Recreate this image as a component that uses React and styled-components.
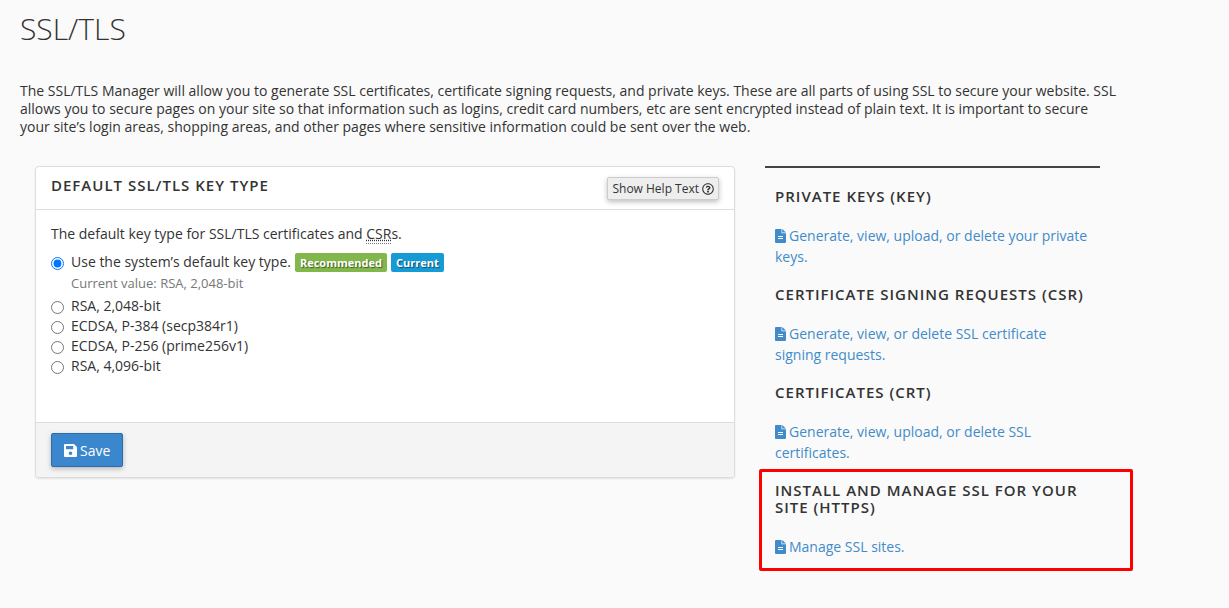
import React, { useState } from "react";
import styled, { createGlobalStyle } from "styled-components";
import { FaRegQuestionCircle } from "react-icons/fa";

const keyTypes = [
  { value: "rsa-2048", label: "RSA, 2,048-bit" },
  { value: "ecdsa-secp384r1", label: "ECDSA, P-384 (secp384r1)" },
  { value: "ecdsa-prime256v1", label: "ECDSA, P-256 (prime256v1)" },
  { value: "rsa-4096", label: "RSA, 4,096-bit" },
];

const sections = [
  {
    title: "Private Keys (KEY)",
    link: "Generate, view, upload, or delete your private keys.",
    href: "#keys",
  },
  {
    title: "Certificate Signing Requests (CSR)",
    link: "Generate, view, or delete SSL certificate signing requests.",
    href: "#csrs",
  },
  {
    title: "Certificates (CRT)",
    link: "Generate, view, upload, or delete SSL certificates.",
    href: "#certificates",
  },
  {
    title: "Install and Manage SSL for your site (HTTPS)",
    link: "Manage SSL sites.",
    href: "#install",
    highlighted: true,
  },
];

const FileIcon = () => (
  <svg width="11" height="14" viewBox="0 0 11 14" aria-hidden="true">
    <path
      fill="currentColor"
      fillRule="evenodd"
      d="M1 0h5.5v4.3h4.5V13a1 1 0 0 1-1 1H1a1 1 0 0 1-1-1V1a1 1 0 0 1 1-1zM3 7v1h5v-1zM3 9v1h5v-1z"
    />
    <path fill="currentColor" d="M7.2 0l3.8 3.6H7.2z" />
  </svg>
);

const SaveIcon = () => (
  <svg width="13" height="13" viewBox="0 0 13 13" aria-hidden="true">
    <path
      fill="currentColor"
      fillRule="evenodd"
      d="M1 0h9l3 3v9a1 1 0 0 1-1 1H1a1 1 0 0 1-1-1V1a1 1 0 0 1 1-1zM2 2v3.2h7.2V2zM6.5 7.4a1.8 1.8 0 1 0 0 3.6a1.8 1.8 0 0 0 0-3.6z"
    />
  </svg>
);

const App = () => {
  const [keyType, setKeyType] = useState("system");

  const handleChange = (e) => {
    setKeyType(e.target.value);
  };

  return (
    <>
      <GlobalStyle />
      <Wrapper>
        <Title>SSL/TLS</Title>
        <Intro>
          The SSL/TLS Manager will allow you to generate SSL certificates,
          certificate signing requests, and private keys. These are all parts of
          using SSL to secure your website. SSL allows you to secure pages on
          your site so that information such as logins, credit card numbers, etc
          are sent encrypted instead of plain text. It is important to secure
          your site’s login areas, shopping areas, and other pages where
          sensitive information could be sent over the web.
        </Intro>
        <Columns>
          <Panel onSubmit={(e) => e.preventDefault()}>
            <PanelHeader>
              <Heading>Default SSL/TLS Key Type</Heading>
              <HelpButton type="button">
                Show Help Text <FaRegQuestionCircle />
              </HelpButton>
            </PanelHeader>
            <PanelBody>
              <p id="key-type-label">
                The default key type for SSL/TLS certificates and{" "}
                <abbr title="Certificate Signing Request">CSR</abbr>s.
              </p>
              <Options role="radiogroup" aria-labelledby="key-type-label">
                <Option>
                  <input
                    type="radio"
                    name="keyType"
                    value="system"
                    checked={keyType === "system"}
                    onChange={handleChange}
                  />
                  <span>Use the system’s default key type.</span>
                  <Badge $color="#82b74b">Recommended</Badge>
                  <Badge $color="#179bd7">Current</Badge>
                </Option>
                <CurrentValue>Current value: RSA, 2,048-bit</CurrentValue>
                {keyTypes.map(({ value, label }) => (
                  <Option key={value}>
                    <input
                      type="radio"
                      name="keyType"
                      value={value}
                      checked={keyType === value}
                      onChange={handleChange}
                    />
                    <span>{label}</span>
                  </Option>
                ))}
              </Options>
            </PanelBody>
            <PanelFooter>
              <SaveButton type="submit">
                <SaveIcon /> Save
              </SaveButton>
            </PanelFooter>
          </Panel>
          <Sidebar>
            {sections.map(({ title, link, href, highlighted }) => (
              <Section key={href} $highlighted={highlighted}>
                <Heading>{title}</Heading>
                <SectionLink href={href}>
                  <FileIcon />
                  {link}
                </SectionLink>
              </Section>
            ))}
          </Sidebar>
        </Columns>
      </Wrapper>
    </>
  );
};

const GlobalStyle = createGlobalStyle`
  * {
    box-sizing: border-box;
  }
  body {
    margin: 0;
    background: #fafafa;
    color: #333333;
    font-family: "Open Sans", "Noto Sans", sans-serif;
    font-size: 14px;
    line-height: 18px;
  }
  h1,
  h2,
  p {
    margin: 0;
  }
  button {
    font-family: inherit;
    cursor: pointer;
  }
  abbr {
    border-bottom: 1px dotted #777777;
  }
`;

const Wrapper = styled.main`
  max-width: 1140px;
  padding: 11px 20px 30px;
`;

const Title = styled.h1`
  font-size: 30px;
  font-weight: 300;
  line-height: 36px;
`;

const Intro = styled.p`
  margin-top: 35px;
`;

const Columns = styled.div`
  display: grid;
  grid-template-columns: minmax(0, 700fr) minmax(0, 335fr);
  align-items: start;
  gap: 30px;
  margin-top: 30px;
  padding: 0 20px 0 15px;
`;

const Heading = styled.h2`
  font-size: 15px;
  font-weight: 600;
  line-height: 17px;
  letter-spacing: 1px;
  text-transform: uppercase;
`;

const Panel = styled.form`
  background: #ffffff;
  border: 1px solid #dddddd;
  border-radius: 4px;
  box-shadow: 0 1px 2px rgba(0, 0, 0, 0.1);
  overflow: hidden;
`;

const PanelHeader = styled.header`
  display: flex;
  justify-content: space-between;
  align-items: flex-start;
  padding: 10px 15px 9px;
  border-bottom: 1px solid #dddddd;
`;

const HelpButton = styled.button`
  display: flex;
  align-items: center;
  gap: 3px;
  height: 23px;
  padding: 0 4px;
  color: #333333;
  background: #eeeeee;
  border: 1px solid #cccccc;
  border-radius: 2px;
  box-shadow: 0 2px 5px rgba(0, 0, 0, 0.25);
  font-size: 12px;
`;

const PanelBody = styled.div`
  padding: 15px 15px 46px;
`;

const Options = styled.div`
  margin-top: 9px;
`;

const Option = styled.label`
  display: flex;
  align-items: center;
  height: 20px;
  input {
    width: 13px;
    height: 13px;
    margin: 3px 7px 0 0;
  }
`;

const Badge = styled.span`
  margin-left: 4px;
  padding: 0 5px;
  color: #ffffff;
  background: ${(props) => props.$color};
  border-radius: 2px;
  font-size: 11px;
  font-weight: 700;
  line-height: 19px;
  text-shadow: 1px 1px 1px rgba(0, 0, 0, 0.5);
`;

const CurrentValue = styled.p`
  padding: 2px 0 4px 20px;
  color: #777777;
  font-size: 13px;
`;

const PanelFooter = styled.footer`
  padding: 10px 15px;
  background: #f4f4f4;
  border-top: 1px solid #dddddd;
`;

const SaveButton = styled.button`
  display: flex;
  align-items: center;
  gap: 3px;
  height: 34px;
  padding: 0 12px;
  color: #ffffff;
  background: #3a87cd;
  border: 1px solid #2a6cae;
  border-radius: 2px;
  box-shadow: 0 2px 5px rgba(0, 0, 0, 0.25);
  font-size: 14px;
`;

const Sidebar = styled.aside`
  display: flex;
  flex-direction: column;
  gap: 19px;
  padding: 20px 10px 0;
  border-top: 2px solid #444444;
`;

const Section = styled.section`
  position: relative;
  display: flex;
  flex-direction: column;
  gap: 20px;
  &::after {
    content: "";
    display: ${(props) => (props.$highlighted ? "block" : "none")};
    position: absolute;
    inset: -13px -43px -14px -16px;
    border: 3px solid #ff0000;
    border-radius: 2px;
    pointer-events: none;
  }
`;

const SectionLink = styled.a`
  color: #428bca;
  line-height: 21px;
  text-decoration: none;
  svg {
    margin-right: 3px;
    vertical-align: -2px;
  }
`;

export default App;
